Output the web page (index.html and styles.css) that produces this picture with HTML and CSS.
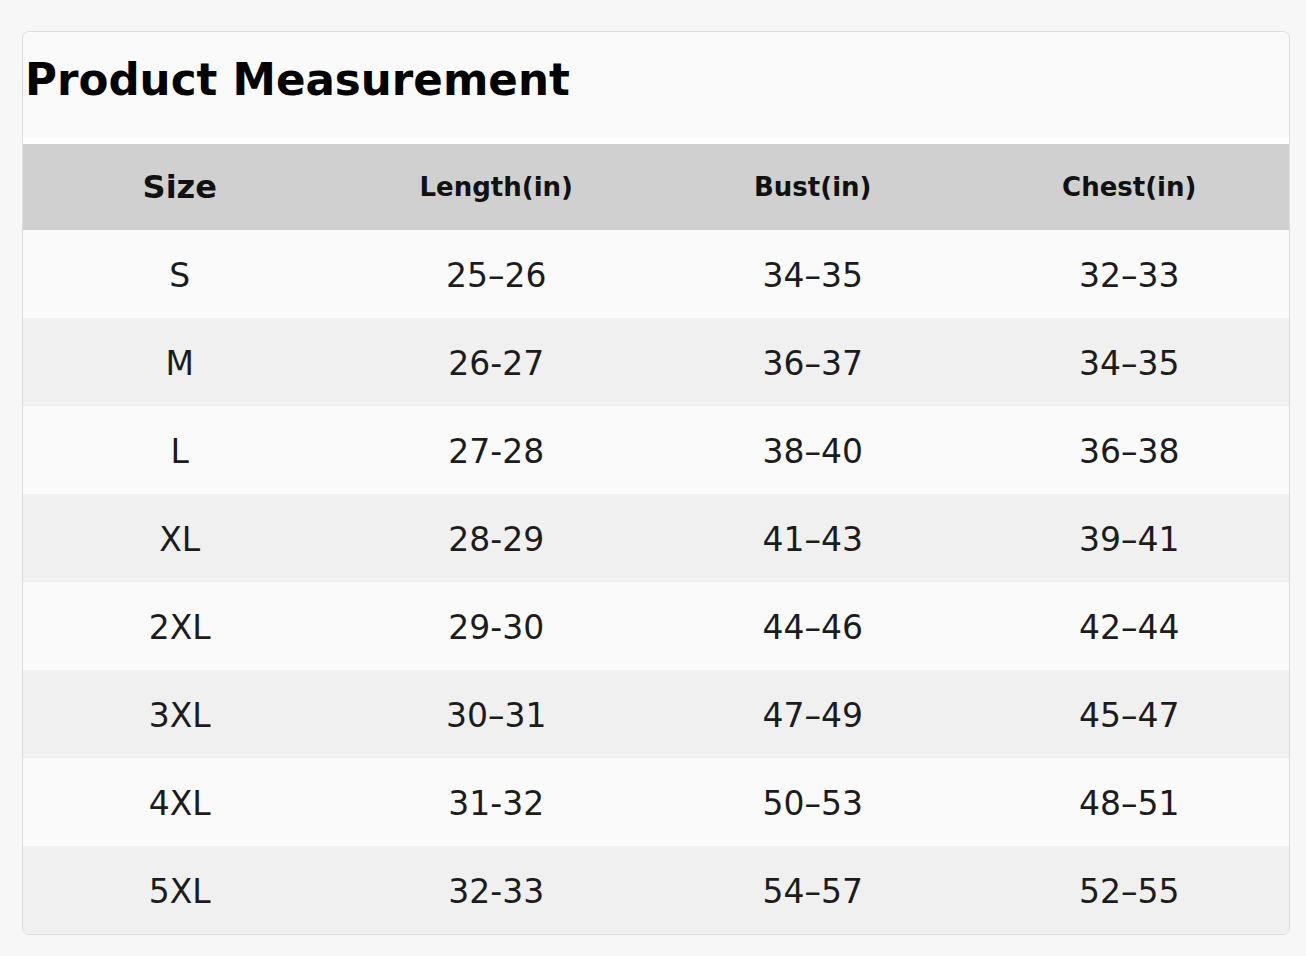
FILE: index.html
```html
<!DOCTYPE html>
<html lang="en">
<head>
<meta charset="utf-8">
<title>Product Measurement</title>
<link rel="stylesheet" href="styles.css">
</head>
<body>
<div class="card">
  <div class="title-area"><h1 class="title">Product Measurement</h1></div>
  <table class="size-table">
    <thead>
      <tr class="head-row">
        <th class="th-size">Size</th>
        <th>Length(in)</th>
        <th>Bust(in)</th>
        <th>Chest(in)</th>
      </tr>
    </thead>
    <tbody>
      <tr><td>S</td><td>25–26</td><td>34–35</td><td>32–33</td></tr>
      <tr><td>M</td><td>26-27</td><td>36–37</td><td>34–35</td></tr>
      <tr><td>L</td><td>27-28</td><td>38–40</td><td>36–38</td></tr>
      <tr><td>XL</td><td>28-29</td><td>41–43</td><td>39–41</td></tr>
      <tr><td>2XL</td><td>29-30</td><td>44–46</td><td>42–44</td></tr>
      <tr><td>3XL</td><td>30–31</td><td>47–49</td><td>45–47</td></tr>
      <tr><td>4XL</td><td>31-32</td><td>50–53</td><td>48–51</td></tr>
      <tr><td>5XL</td><td>32-33</td><td>54–57</td><td>52–55</td></tr>
    </tbody>
  </table>
</div>
</body>
</html>
```
FILE: styles.css
```css
html, body {
  margin: 0;
  padding: 0;
  background: #f7f7f7;
}
body {
  padding: 31px 17px 0 22px;
  font-family: "DejaVu Sans", "Noto Sans", sans-serif;
}
.card {
  width: 1266px;
  background: #fafafa;
  border: 1px solid #dcdcdc;
  border-radius: 7px;
  overflow: hidden;
}
.title-area {
  box-sizing: border-box;
  height: 112px;
  padding-top: 23px;
  padding-left: 2px;
  border-bottom: 6px solid #ffffff;
}
.title {
  margin: 0;
  font-size: 43.6px;
  line-height: 51px;
  font-weight: bold;
  color: #000;
}
.size-table {
  width: 100%;
  border-collapse: collapse;
  table-layout: fixed;
}
.head-row {
  background: #d0d0d0;
  height: 86px;
}
.size-table th {
  font-size: 26px;
  font-weight: bold;
  color: #111;
  text-align: center;
  padding: 0 3px 0 0;
}
.size-table th.th-size {
  font-size: 32px;
}
.size-table tbody tr {
  height: 88px;
  background: #fafafa;
}
.size-table tbody tr:nth-child(even) {
  background: #f0f0f0;
}
.size-table td {
  font-size: 33px;
  color: #1c1c1c;
  text-align: center;
  padding: 3px 3px 0 0;
}
```
